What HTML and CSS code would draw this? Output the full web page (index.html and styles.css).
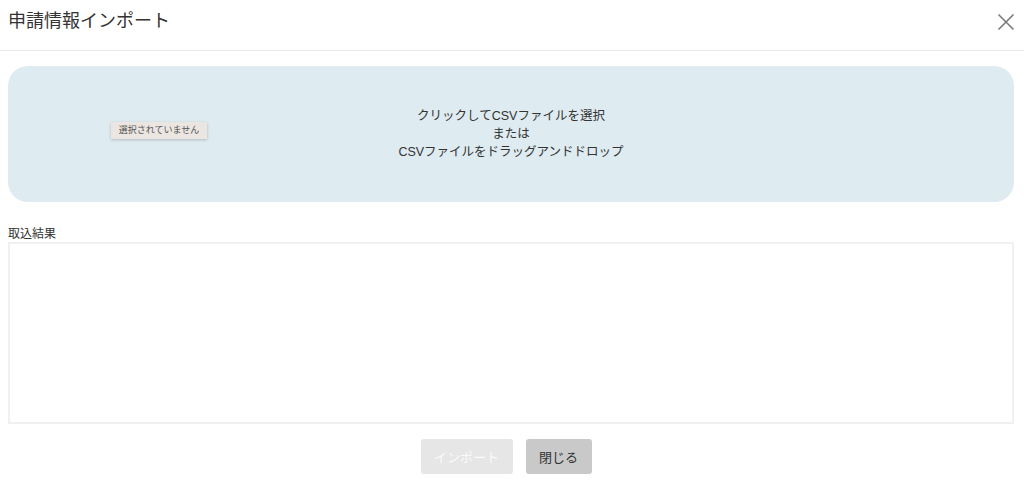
FILE: index.html
```html
<!DOCTYPE html>
<html lang="ja">
<head>
<meta charset="utf-8">
<title>申請情報インポート</title>
<link rel="stylesheet" href="styles.css">
</head>
<body>
<div class="modal">
  <header class="modal-header">
    <h1 class="modal-title">申請情報インポート</h1>
    <button class="close-btn" aria-label="閉じる">
      <svg width="18" height="18" viewBox="0 0 18 18"><path d="M1.5 1.5L16.5 16.5M16.5 1.5L1.5 16.5" stroke="#7a7a7a" stroke-width="1.6" fill="none"/></svg>
    </button>
  </header>
  <main class="modal-body">
    <div class="dropzone">
      <span class="file-chip">選択されていません</span>
      <p class="drop-text">クリックしてCSVファイルを選択<br>または<br>CSVファイルをドラッグアンドドロップ</p>
    </div>
    <label class="result-label">取込結果</label>
    <div class="result-box"></div>
    <div class="actions">
      <button class="btn btn-disabled" disabled>インポート</button>
      <button class="btn btn-close">閉じる</button>
    </div>
  </main>
</div>
</body>
</html>
```
FILE: styles.css
```css
* { box-sizing: border-box; }
html, body { margin: 0; padding: 0; background: #fff; }
body {
  font-family: "Liberation Sans", "Noto Sans CJK JP", sans-serif;
  color: #333;
}
.modal { width: 1024px; }
.modal-header {
  height: 51px;
  border-bottom: 1px solid #e8e8e8;
  display: flex;
  align-items: flex-start;
  justify-content: space-between;
  padding: 9px 9px 0 8px;
}
.modal-title {
  margin: 0;
  font-size: 18px;
  font-weight: normal;
  line-height: 24px;
  color: #333;
}
.close-btn {
  border: 0;
  background: none;
  padding: 0;
  margin-top: 4px;
  width: 18px;
  height: 18px;
  display: flex;
}
.modal-body { padding: 15px 10px 0 8px; }
.dropzone {
  position: relative;
  height: 136px;
  background: #deebf0;
  border-radius: 20px;
  display: flex;
  align-items: center;
  justify-content: center;
}
.drop-text {
  margin: 0;
  text-align: center;
  font-size: 12.5px;
  line-height: 18px;
  color: #333;
}
.file-chip {
  position: absolute;
  left: 103px;
  top: 56px;
  width: 96px;
  height: 17px;
  background: #ebe6e1;
  color: #555;
  font-size: 9px;
  line-height: 17px;
  text-align: center;
  box-shadow: 0 1px 3px rgba(0,0,0,0.2);
}
.result-label {
  display: block;
  margin-top: 24px;
  font-size: 12px;
  line-height: 16px;
  color: #333;
}
.result-box {
  height: 182px;
  border: 2px solid #f0f0f0;
  margin-top: 0;
  width: 1006px;
}
.actions {
  display: flex;
  justify-content: center;
  gap: 13px;
  margin-top: 15px;
  padding-right: 10px;
}
.btn {
  border: 0;
  border-radius: 3px;
  height: 35px;
  font-family: inherit;
  font-size: 13px;
}
.btn-disabled {
  width: 92px;
  background: #e6e6e6;
  color: #fafafa;
}
.btn-close {
  width: 66px;
  background: #c9c9c9;
  color: #333;
}
```
